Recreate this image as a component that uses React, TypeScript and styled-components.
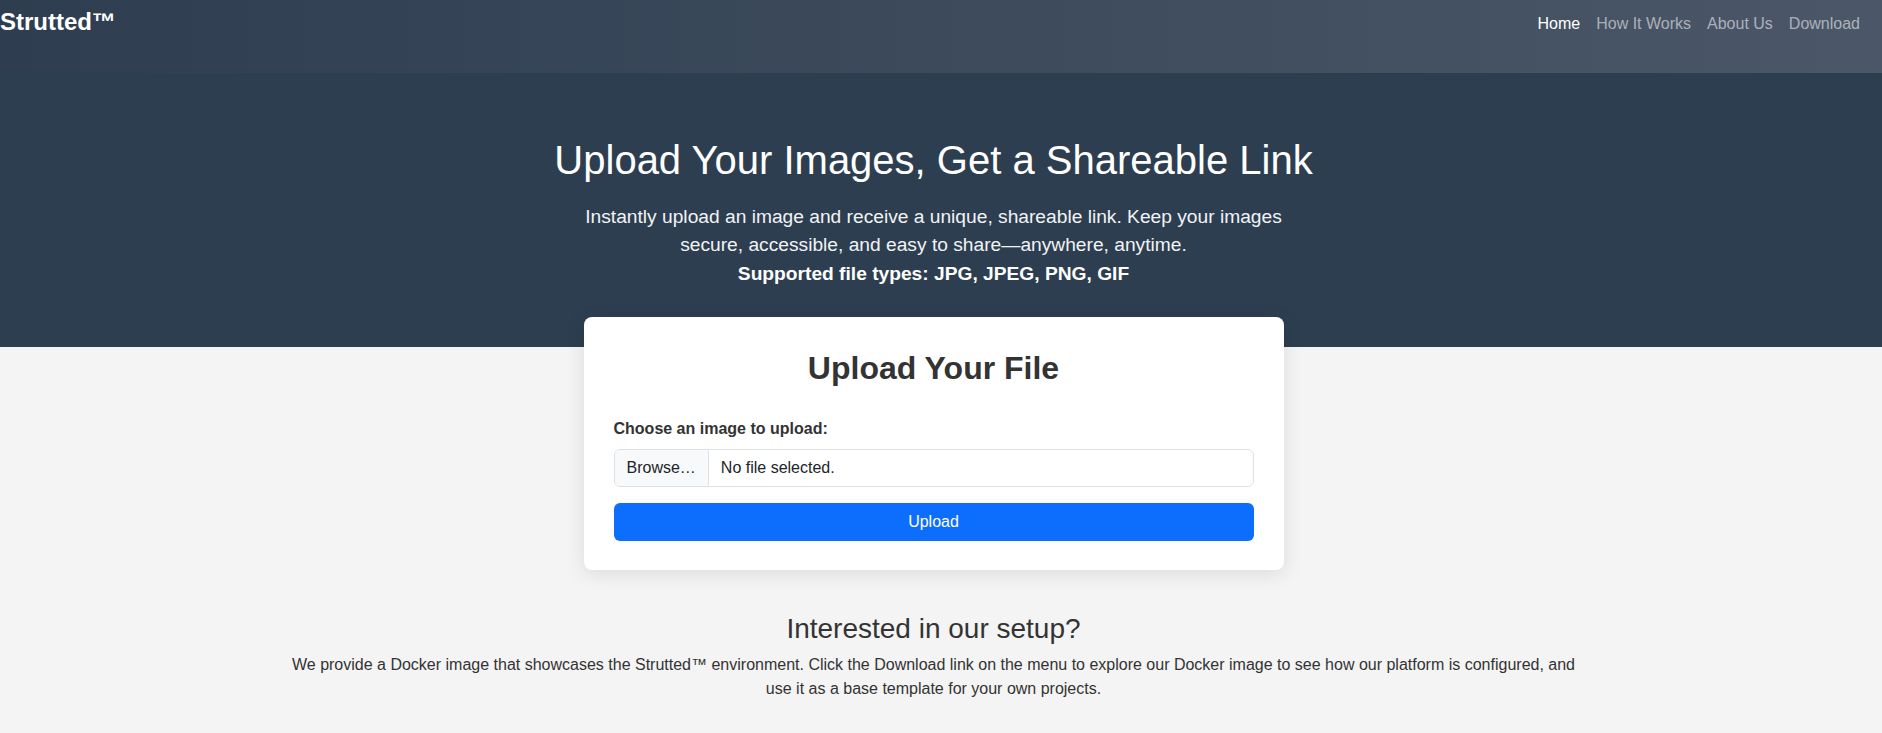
import React from "react";
import styled, { createGlobalStyle } from "styled-components";

const GlobalStyle = createGlobalStyle`
  body {
    margin: 0;
    font-family: "Liberation Sans", Arial, sans-serif;
    background-color: #f4f4f4;
    color: #333;
  }
`;

const links = ["Home", "How It Works", "About Us", "Download"];

const App = () => {
  return (
    <div>
      <GlobalStyle />
      <Navbar>
        <Brand href="#">Strutted™</Brand>
        <NavList>
          {links.map((l, i) => (
            <NavLink key={l} href="#" $active={i === 0}>
              {l}
            </NavLink>
          ))}
        </NavList>
      </Navbar>
      <Hero>
        <HeroTitle>Upload Your Images, Get a Shareable Link</HeroTitle>
        <Lead>
          Instantly upload an image and receive a unique, shareable link. Keep
          your images secure, accessible, and easy to share—anywhere, anytime.
          <br />
          <strong>Supported file types: JPG, JPEG, PNG, GIF</strong>
        </Lead>
      </Hero>
      <Main>
        <Card>
          <CardTitle>Upload Your File</CardTitle>
          <form onSubmit={(e) => e.preventDefault()}>
            <Label>Choose an image to upload:</Label>
            <FileField>
              <BrowseBox>Browse…</BrowseBox>
              <FileName>No file selected.</FileName>
            </FileField>
            <UploadButton type="submit">Upload</UploadButton>
          </form>
        </Card>
        <Setup>
          <SetupTitle>Interested in our setup?</SetupTitle>
          <SetupText>
            We provide a Docker image that showcases the Strutted™ environment.
            Click the Download link on the menu to explore our Docker image to
            see how our platform is configured, and use it as a base template
            for your own projects.
          </SetupText>
        </Setup>
      </Main>
    </div>
  );
};

export default App;

const Navbar = styled.nav`
  height: 73px;
  box-sizing: border-box;
  display: flex;
  align-items: flex-start;
  justify-content: space-between;
  padding-right: 14px;
  background: linear-gradient(90deg, #2e3d50 0%, #4b5769 100%);
`;
const Brand = styled.a`
  padding-top: 8px;
  font-size: 24px;
  font-weight: bold;
  line-height: 1.2;
  color: #fff;
  text-decoration: none;
`;
const NavList = styled.div`
  display: flex;
  padding-top: 12px;
`;
const NavLink = styled.a<{ $active?: boolean }>`
  padding: 0 8px;
  font-size: 16px;
  line-height: 1.5;
  color: ${(p) => (p.$active ? "#fff" : "rgba(255, 255, 255, 0.55)")};
  text-decoration: none;
`;
const Hero = styled.header`
  background-color: #2d3e50;
  color: #fff;
  text-align: center;
  padding: 63px 27px 59px 12px;
`;
const HeroTitle = styled.h1`
  margin: 0 0 19px;
  font-size: 40px;
  font-weight: 300;
  line-height: 1.2;
`;
const Lead = styled.p`
  max-width: 720px;
  margin: 0 auto;
  font-size: 19.2px;
  line-height: 28.4px;
  color: #f1f3f5;
  strong {
    color: #fff;
  }
`;
const Main = styled.main`
  padding-right: 15px;
`;
const Card = styled.section`
  position: relative;
  box-sizing: border-box;
  width: 700px;
  margin: -30px auto 0;
  padding: 31px 30px 29px;
  background-color: #fff;
  border-radius: 8px;
  box-shadow: 0 4px 20px rgba(0, 0, 0, 0.1);
`;
const CardTitle = styled.h2`
  margin: 1px 0 29px;
  font-size: 32px;
  font-weight: bold;
  line-height: 1.2;
  text-align: center;
  color: #333;
`;
const Label = styled.label`
  display: block;
  margin-bottom: 8px;
  font-size: 16px;
  font-weight: bold;
  line-height: 1.5;
  color: #333;
`;
const FileField = styled.div`
  display: flex;
  height: 38px;
  box-sizing: border-box;
  border: 1px solid #dee2e6;
  border-radius: 6px;
  overflow: hidden;
  font-size: 16px;
  color: #212529;
`;
const BrowseBox = styled.span`
  display: flex;
  align-items: center;
  padding: 0 12px;
  background-color: #f8f9fa;
  border-right: 1px solid #dee2e6;
`;
const FileName = styled.span`
  display: flex;
  align-items: center;
  padding: 0 12px;
`;
const UploadButton = styled.button`
  display: block;
  width: 100%;
  height: 38px;
  margin-top: 16px;
  border: none;
  border-radius: 6px;
  background-color: #0d6efd;
  color: #fff;
  font-family: inherit;
  font-size: 16px;
  cursor: pointer;
`;
const Setup = styled.section`
  max-width: 1320px;
  box-sizing: border-box;
  margin: 42px auto 0;
  padding: 0 12px 40px;
  text-align: center;
`;
const SetupTitle = styled.h3`
  margin: 0 0 8px;
  font-size: 28px;
  font-weight: 500;
  line-height: 1.2;
  color: #333;
`;
const SetupText = styled.p`
  margin: 0;
  font-size: 16px;
  line-height: 1.5;
  color: #333;
`;
